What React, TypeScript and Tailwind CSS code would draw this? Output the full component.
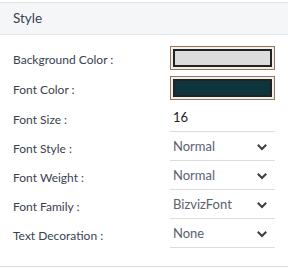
import React from "react";

const Chevron = () => (
  <svg width="10" height="7" viewBox="0 0 10 7" className="mr-[8px]">
    <path d="M1.5 1.5 L5 5 L8.5 1.5" fill="none" stroke="#3a3f46" strokeWidth="2" strokeLinecap="square" />
  </svg>
);

const ColorBox = ({ color }: { color: string }) => (
  <div className="w-[105px] h-[24px] border border-[#957659] bg-[#f2f0ee] p-[2px]">
    <div className="w-full h-full border-2 border-[#222222]" style={{ background: color }} />
  </div>
);

const SelectRow = ({ label, value, select }: { label: string; value: string; select?: boolean }) => (
  <div className="flex items-stretch h-[29px]">
    <div className="w-[170px] pl-[13px] flex items-center pt-[4px] text-[12px] text-[#3a4150]">{label}</div>
    <div className="w-[105px] border-b border-[#dcdcdc] flex items-center justify-between pl-[3px] pt-[2px]">
      <span className={select ? "text-[13px] text-[#5a6270]" : "text-[13px] text-[#222222]"}>{value}</span>
      {select && <Chevron />}
    </div>
  </div>
);

export default function App() {
  return (
    <div className="w-[288px] h-[268px] bg-white" style={{ fontFamily: 'Lato, sans-serif' }}>
      <div className="pt-[2px]">
        <div className="h-[33px] bg-[#f5f6f7] border-t border-b border-[#e2e4e6] flex items-center pl-[13px] text-[13.5px] text-[#3a4150]">
          Style
        </div>
      </div>
      <div className="pt-[11px] flex flex-col gap-[6px]">
        <div className="flex items-center">
          <div className="w-[170px] pl-[13px] pt-[4px] text-[12px] text-[#3a4150]">Background Color :</div>
          <ColorBox color="#dcdcdc" />
        </div>
        <div className="flex items-center">
          <div className="w-[170px] pl-[13px] pt-[4px] text-[12px] text-[#3a4150]">Font Color :</div>
          <ColorBox color="#0c353d" />
        </div>
      </div>
      <div className="pt-[3px] flex flex-col">
        <SelectRow label="Font Size :" value="16" />
        <SelectRow label="Font Style :" value="Normal" select />
        <SelectRow label="Font Weight :" value="Normal" select />
        <SelectRow label="Font Family :" value="BizvizFont" select />
        <SelectRow label="Text Decoration :" value="None" select />
      </div>
      <div className="mt-[18px] border-t border-[#dcdcdc]" />
    </div>
  );
}
